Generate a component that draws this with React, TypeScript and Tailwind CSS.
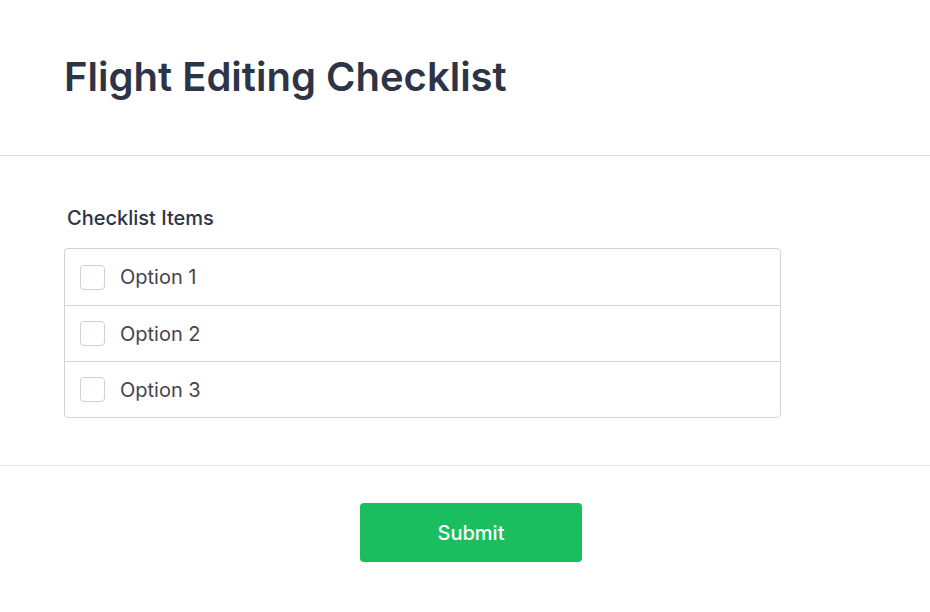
export default function App() {
  const items = ["Option 1", "Option 2", "Option 3"];
  return (
    <div className="w-[930px] h-[612px] bg-white flex flex-col" style={{ fontFamily: "Inter, 'Noto Sans', sans-serif" }}>
      <div className="h-[156px] border-b border-[#dcdde0] flex items-center px-[64px] shrink-0">
        <h1 className="text-[40px] font-semibold text-[#2d3446] leading-none -mt-[2px]">Flight Editing Checklist</h1>
      </div>
      <div className="h-[310px] border-b border-[#e8e8ee] px-[64px] pt-[50px] shrink-0">
        <div className="text-[20px] font-medium text-[#2d3446] pl-[3px] leading-[24px]">Checklist Items</div>
        <div className="mt-[18px] w-[717px] border border-[#d2d2d6] rounded-[4px]">
          {items.map((label, i) => (
            <label
              key={label}
              className={`flex items-center h-[56px] pl-[15px] gap-[15px] ${i > 0 ? "border-t border-[#d2d2d6]" : ""}`}
            >
              <span className="w-[25px] h-[25px] border border-[#c9d1de] rounded-[4px] bg-white shrink-0" />
              <span className="text-[20px] text-[#45454d] leading-none">{label}</span>
            </label>
          ))}
        </div>
      </div>
      <div className="flex-1 bg-white flex justify-center pt-[37px] pl-[12px]">
        <button className="w-[222px] h-[59px] rounded-[4px] bg-[#1abe5e] text-white text-[20px] font-medium">
          Submit
        </button>
      </div>
    </div>
  );
}
